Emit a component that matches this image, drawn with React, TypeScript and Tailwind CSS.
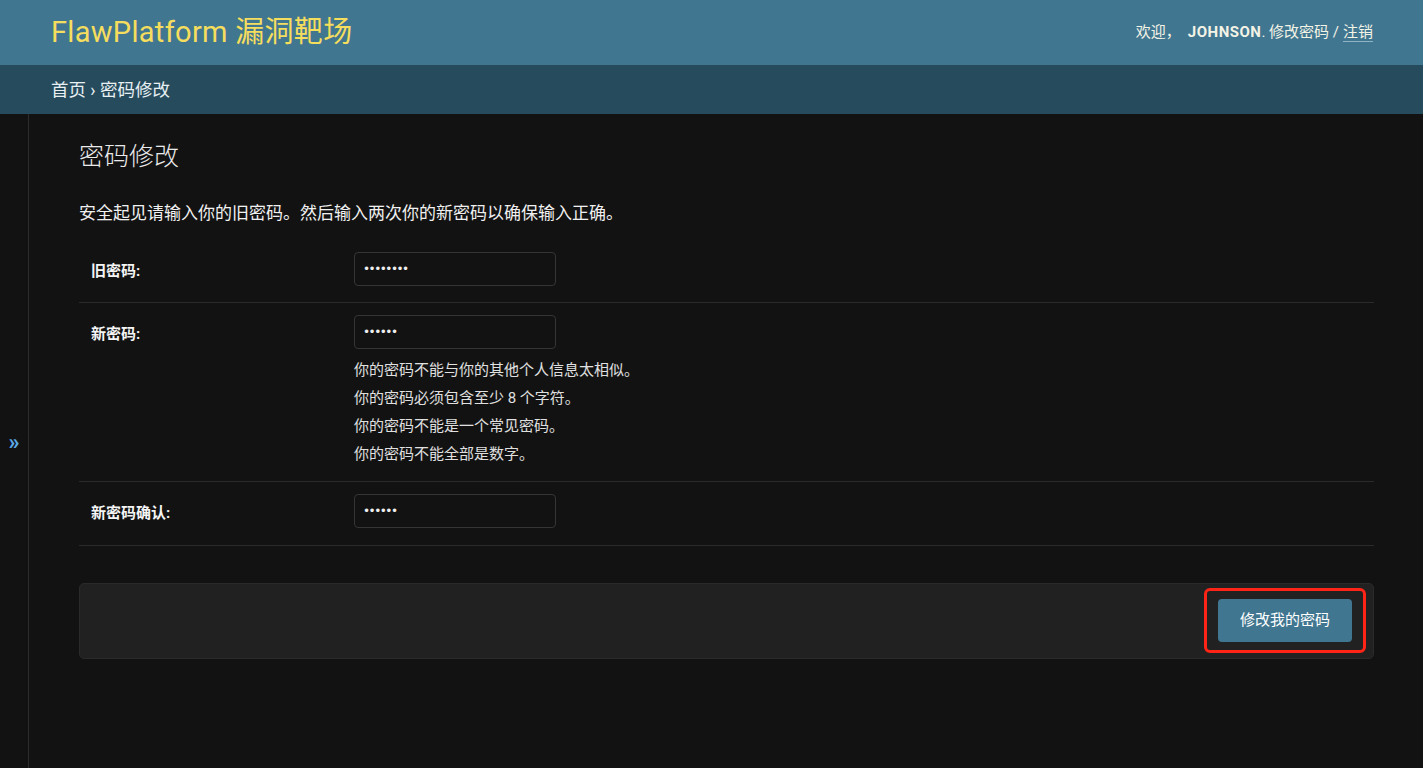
const FONT = "font-['Roboto','Noto_Sans_CJK_SC',sans-serif]";

const HELP = [
  "你的密码不能与你的其他个人信息太相似。",
  "你的密码必须包含至少 8 个字符。",
  "你的密码不能是一个常见密码。",
  "你的密码不能全部是数字。",
];

function PwInput({ dots }: { dots: number }) {
  return (
    <div className="w-[202px] h-[34px] rounded-[4px] border border-[#353535] bg-[#121212] flex items-center px-[8px] text-[#eee] text-[12px] tracking-[-1.5px] font-['DejaVu_Sans',sans-serif]">
      {"•".repeat(dots)}
    </div>
  );
}

function Row({
  label,
  dots,
  help,
  pad,
}: {
  label: string;
  dots: number;
  help?: string[];
  pad: string;
}) {
  return (
    <div className={`flex border-b border-[#2a2a2a] ${pad}`}>
      <div className="w-[275px] pl-[12px] pt-[8px] text-[15px] font-bold text-[#f5f5f5]">
        {label}
      </div>
      <div>
        <PwInput dots={dots} />
        {help && (
          <ul className="mt-[7px] text-[15px] text-[#e0e0e0] leading-[28px]">
            {help.map((h) => (
              <li key={h}>{h}</li>
            ))}
          </ul>
        )}
      </div>
    </div>
  );
}

export default function App() {
  return (
    <div className={`min-h-[768px] bg-[#121212] flex flex-col ${FONT}`}>
      <header className="h-[65px] bg-[#417690] flex items-center justify-between pl-[51px] pr-[50px]">
        <div className="text-[29px] text-[#f5dd5d] font-normal tracking-[0.3px]">
          FlawPlatform 漏洞靶场
        </div>
        <div className="text-[15px] text-[#f3f3e6] flex items-center gap-[4px]">
          <span>欢迎，</span>
          <span className="ml-[3px] font-bold tracking-[0.5px]">JOHNSON</span>
          <span className="-ml-[4px]">. 修改密码 /</span>
          <span className="border-b border-[#8fb3c4] leading-[18px]">注销</span>
        </div>
      </header>
      <div className="h-[49px] bg-[#264b5d] flex items-center pl-[51px] pt-[2px] text-[17.5px] text-[#e8f0f3]">
        首页 › 密码修改
      </div>
      <div className="flex flex-1">
        <div className="w-[29px] border-r border-[#2c2c2c] flex items-center justify-center">
          <span className="text-[#5aa9e6] text-[22px] font-bold">»</span>
        </div>
        <main className="flex-1 pl-[50px] pr-[49px] pt-[26px]">
          <h1 className="text-[25px] text-[#eaeaea] font-light leading-[34px]">密码修改</h1>
          <p className="mt-[27px] text-[17px] text-[#f0f0f0]">
            安全起见请输入你的旧密码。然后输入两次你的新密码以确保输入正确。
          </p>
          <div className="mt-[11px]">
            <Row label="旧密码:" dots={8} pad="pt-[14px] pb-[16px]" />
            <Row label="新密码:" dots={6} help={HELP} pad="pt-[12px] pb-[13px]" />
            <Row label="新密码确认:" dots={6} pad="pt-[12px] pb-[17px]" />
          </div>
          <div className="mt-[37px] h-[76px] rounded-[5px] border border-[#2a2a2a] bg-[#212121] flex items-center justify-end pr-[7px]">
            <div className="rounded-[6px] border-[3px] border-[#ff2415] py-[8px] px-[11px]">
              <button className="h-[43px] w-[134px] rounded-[4px] bg-[#417690] text-[15px] text-white">
                修改我的密码
              </button>
            </div>
          </div>
        </main>
      </div>
    </div>
  );
}
